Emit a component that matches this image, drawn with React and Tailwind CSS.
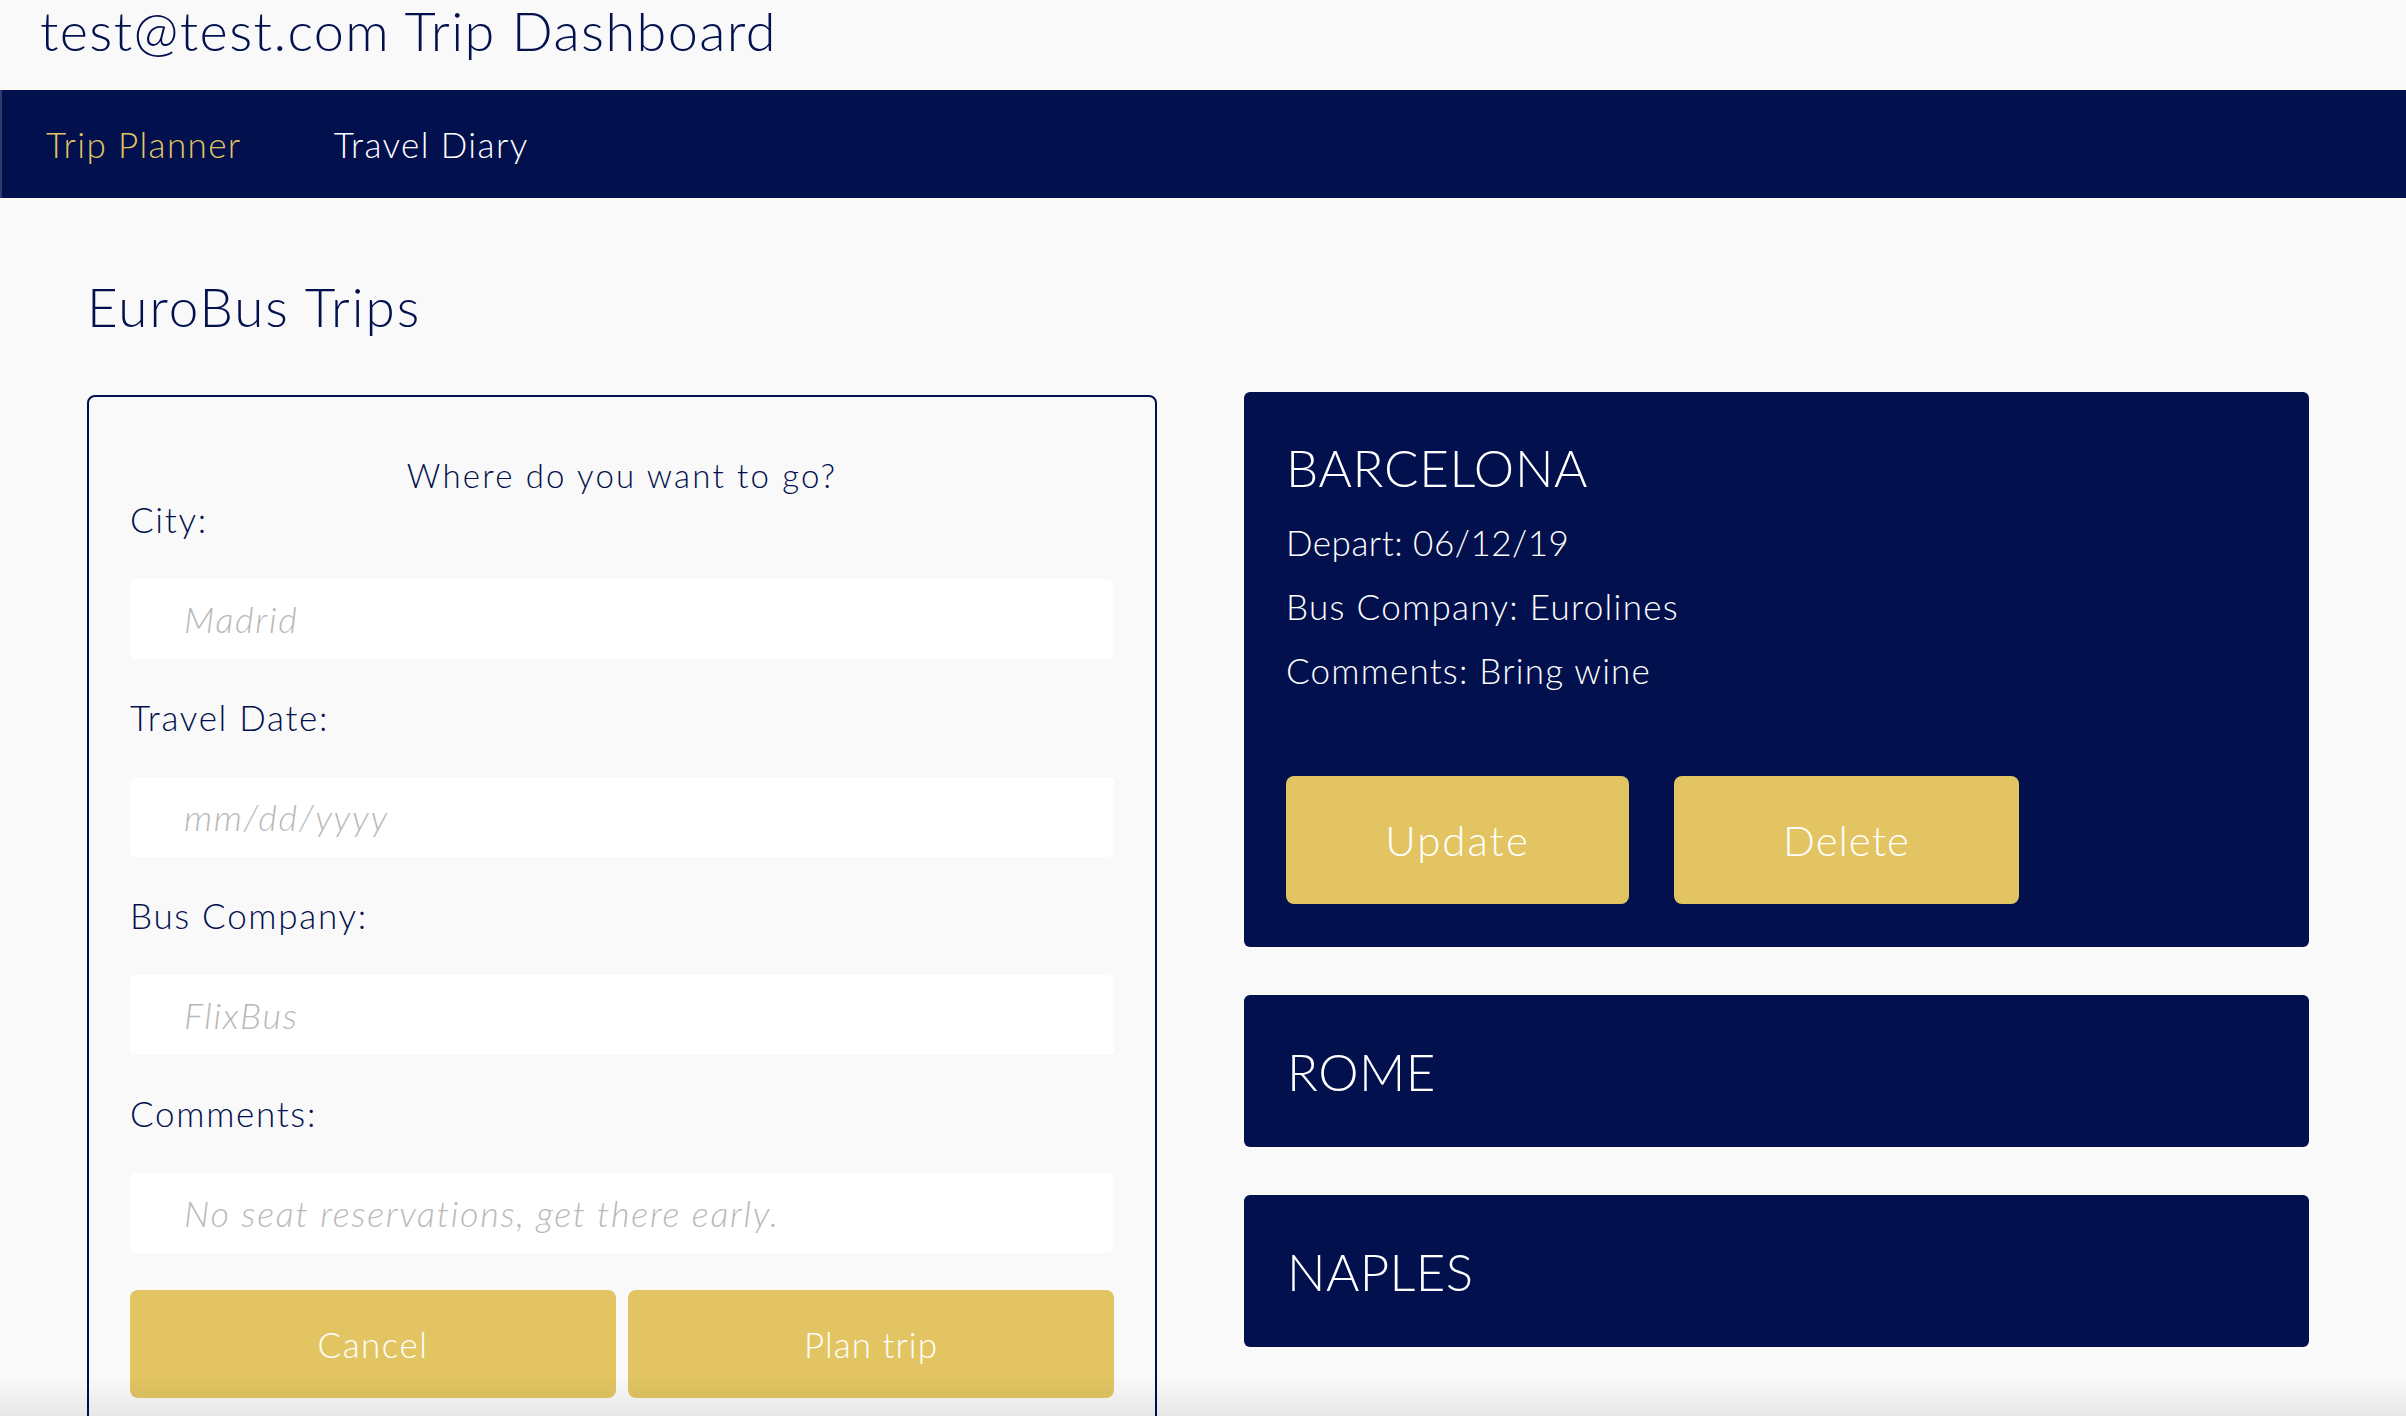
import React from "react";

const trips = [
  {
    city: "BARCELONA",
    depart: "06/12/19",
    company: "Eurolines",
    comments: "Bring wine",
    open: true,
  },
  { city: "ROME" },
  { city: "NAPLES" },
];

const fields = [
  { label: "City:", placeholder: "Madrid" },
  { label: "Travel Date:", placeholder: "mm/dd/yyyy" },
  { label: "Bus Company:", placeholder: "FlixBus" },
  { label: "Comments:", placeholder: "No seat reservations, get there early." },
];

function Header() {
  return (
    <header className="h-[90px] pl-[40px] pt-[4px]">
      <h1 className="text-[54px] leading-none font-light tracking-[1.4px]">
        test@test.com Trip Dashboard
      </h1>
    </header>
  );
}

function Navbar() {
  return (
    <nav className="h-[108px] bg-[#02104d] border-l-2 border-[#2f3a6b] flex items-center pl-[44px] gap-[92px] text-[35px] font-light leading-none tracking-[1.4px]">
      <a href="#" className="text-[#e2c562]">Trip Planner</a>
      <a href="#" className="text-white">Travel Diary</a>
    </nav>
  );
}

function TripForm() {
  return (
    <form className="mt-[3px] border-2 border-[#02104d] rounded-[8px] px-[41px] pt-[56px] pb-[40px]">
      <h3 className="text-center text-[33px] leading-[45px] font-light tracking-[2.2px]">Where do you want to go?</h3>
      {fields.map((f) => (
        <div key={f.label}>
          <label className="block text-[35px] leading-[43px] font-light tracking-[1.7px] mb-[38px]">{f.label}</label>
          <input
            placeholder={f.placeholder}
            className="block w-full h-[80px] bg-white rounded-[6px] mb-[37px] pl-[54px] text-[36px] font-light italic tracking-[1.7px] placeholder:text-[#b9b9b9] outline-none"
          />
        </div>
      ))}
      <div className="grid grid-cols-2 gap-[12px]">
        <button type="button" className="h-[108px] rounded-[8px] bg-[#e2c562] text-white text-[35px] font-light tracking-[1.5px]">
          Cancel
        </button>
        <button type="button" className="h-[108px] rounded-[8px] bg-[#e2c562] text-white text-[35px] font-light tracking-[1px]">
          Plan trip
        </button>
      </div>
    </form>
  );
}

function TripCard({ trip }) {
  if (!trip.open) {
    return (
      <div className="h-[152px] bg-[#02104d] rounded-[6px] flex items-center px-[43px]">
        <h2 className="text-white text-[51px] leading-none font-light tracking-[0.4px]">{trip.city}</h2>
      </div>
    );
  }
  return (
    <div className="bg-[#02104d] rounded-[6px] px-[42px] pt-[50px] pb-[43px] text-white">
      <h2 className="text-[51px] leading-none font-light tracking-[0.7px] mb-[17px]">{trip.city}</h2>
      <p className="text-[35px] leading-[64px] font-light tracking-[0.5px]">Depart: {trip.depart}</p>
      <p className="text-[35px] leading-[64px] font-light tracking-[1.3px]">Bus Company: {trip.company}</p>
      <p className="text-[35px] leading-[64px] font-light tracking-[1.2px]">Comments: {trip.comments}</p>
      <div className="flex gap-[45px] mt-[74px]">
        <button className="w-[343px] h-[128px] rounded-[8px] bg-[#e2c562] text-[42px] font-light tracking-[2px]">Update</button>
        <button className="w-[345px] h-[128px] rounded-[8px] bg-[#e2c562] text-[42px] font-light tracking-[1px]">Delete</button>
      </div>
    </div>
  );
}

export default function App() {
  return (
    <div className="min-h-screen bg-[#f9f9f9] text-[#02104d] font-['Lato','Open_Sans',sans-serif]">
      <Header />
      <Navbar />
      <main className="pl-[87px]">
        <h1 className="mt-[82px] mb-[59px] text-[53px] leading-none font-light tracking-[2px]">EuroBus Trips</h1>
        <div className="grid grid-cols-[1070px_1065px] gap-[87px] items-start">
          <TripForm />
          <div className="flex flex-col gap-[48px]">
            {trips.map((t) => (
              <TripCard key={t.city} trip={t} />
            ))}
          </div>
        </div>
      </main>
      <div className="fixed inset-x-0 bottom-0 h-[40px] pointer-events-none bg-linear-to-b from-black/0 to-black/[0.07]" />
    </div>
  );
}
